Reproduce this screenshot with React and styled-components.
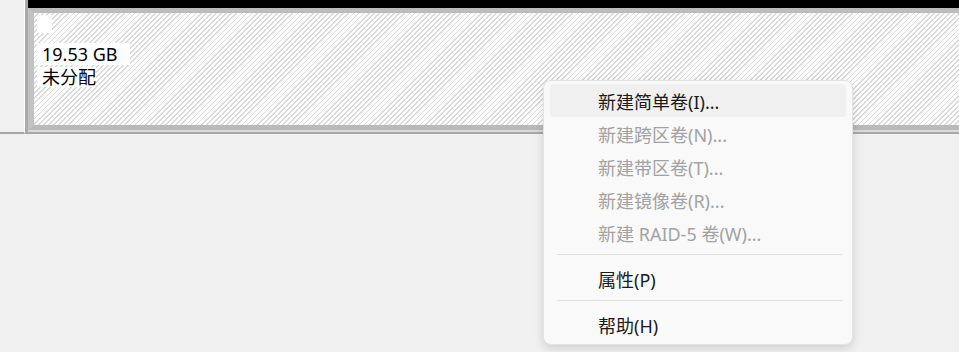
import React from 'react';
import styled, { createGlobalStyle } from 'styled-components';

const GlobalStyle = createGlobalStyle`
  html, body {
    margin: 0;
    padding: 0;
    background: #f0f0f0;
    font-family: "Noto Sans", "Noto Sans CJK SC", sans-serif;
  }
`;

const Screen = styled.div`
  position: relative;
  width: 959px;
  height: 352px;
  overflow: hidden;
  background: #f0f0f0;
`;

const DiskRow = styled.div`
  display: flex;
  height: 134px;
`;

const LeftPane = styled.div`
  width: 25px;
  background: #f0f0f0;
  border-right: 1px solid #ffffff;
  border-bottom: 2px solid #a8a8a8;
  box-sizing: border-box;
`;

const DiskArea = styled.div`
  flex: 1;
  display: flex;
  flex-direction: column;
  border-left: 3px solid #a9a9a9;
  border-bottom: 2px solid #a8a8a8;
  background: #fafafa;
`;

const TopBar = styled.div`
  height: 8px;
  background: #000;
`;

const Partition = styled.div`
  height: 108px;
  border: 5px solid #c2c2c2;
  border-left-width: 6px;
  border-right: 0;
  border-top-color: #bcbcbc;
  border-bottom-color: #b9b9b9;
  padding: 2px 3px 2px 3px;
  background: repeating-linear-gradient(
    135deg,
    #ffffff 0 2.4px,
    #d9d9d9 2.4px 3.6px
  );
`;

const Footer = styled.div`
  flex: 1;
  border-top: 2px solid #dadada;
`;

const Label = styled.div`
  width: fit-content;
  background: #fff;
  color: #000;
  font-size: 18px;
  line-height: ${p => p.$h}px;
  height: ${p => p.$h}px;
  min-width: ${p => p.$w || 0}px;
  margin-top: ${p => p.$gap || 0}px;
  padding: 0 ${p => p.$pr || 0}px 0 5px;
  box-sizing: border-box;
  white-space: nowrap;
`;

const Menu = styled.div`
  position: absolute;
  left: 543px;
  top: 80px;
  width: 310px;
  height: 265px;
  box-sizing: border-box;
  background: #f9f9f9;
  border: 1px solid #e3e3e3;
  border-radius: 8px;
  padding: 3px 6px 3px 6px;
  box-shadow: 0 3px 10px rgba(0, 0, 0, 0.14);
`;

const Item = styled.div`
  height: 33px;
  display: flex;
  align-items: center;
  padding: 1px 0 0 48px;
  box-sizing: border-box;
  border-radius: 4px;
  font-size: 18px;
  color: ${p => (p.$disabled ? '#a2a2a2' : '#1b1b1b')};
  background: ${p => (p.$hover ? '#f0f0f0' : 'transparent')};
  white-space: nowrap;
`;

const Separator = styled.div`
  height: 1px;
  background: #e0e0e0;
  margin: 5px 4px 7px 7px;
`;

const menuItems = [
  { label: '新建简单卷(I)...', hover: true },
  { label: '新建跨区卷(N)...', disabled: true },
  { label: '新建带区卷(T)...', disabled: true },
  { label: '新建镜像卷(R)...', disabled: true },
  { label: '新建 RAID-5 卷(W)...', disabled: true },
];

export default function App() {
  return (
    <Screen>
      <GlobalStyle />
      <DiskRow>
        <LeftPane />
        <DiskArea>
          <TopBar />
          <Partition>
            <Label $h={18} $w={15} />
            <Label $h={22} $gap={10} $pr={12}>19.53 GB</Label>
            <Label $h={20} $gap={2}>未分配</Label>
          </Partition>
          <Footer />
        </DiskArea>
      </DiskRow>
      <Menu>
        {menuItems.map(it => (
          <Item key={it.label} $hover={it.hover} $disabled={it.disabled}>
            {it.label}
          </Item>
        ))}
        <Separator />
        <Item>属性(P)</Item>
        <Separator />
        <Item>帮助(H)</Item>
      </Menu>
    </Screen>
  );
}
